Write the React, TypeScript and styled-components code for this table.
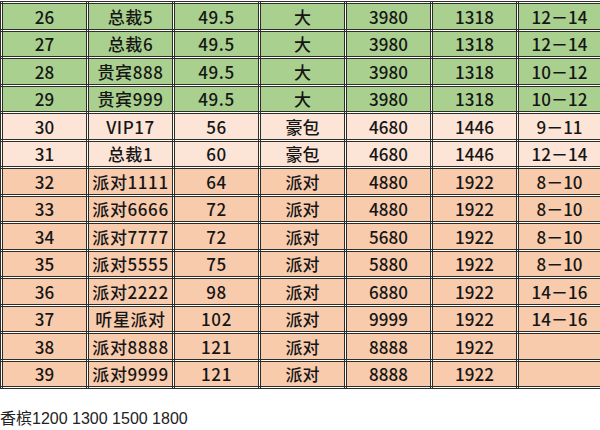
import styled, { createGlobalStyle } from "styled-components";

const GlobalStyle = createGlobalStyle`
  html, body {
    margin: 0;
    padding: 0;
    width: 600px;
    overflow: hidden;
    background: #ffffff;
  }
`;

type Tone = "green" | "light" | "salmon";

const toneColors: Record<Tone, string> = {
  green: "#a9d08e",
  light: "#fce4d6",
  salmon: "#f8cbad",
};

const Page = styled.div`
  padding: 1px 0 0 0;
  width: 600px;
  overflow: hidden;
`;

const Table = styled.table`
  border-collapse: collapse;
  table-layout: fixed;
  width: 600px;
`;

const Row = styled.tr<{ $tone: Tone }>`
  height: 27.5px;
  background: ${(p) => toneColors[p.$tone]};
`;

const Cell = styled.td<{ $last?: boolean }>`
  border: 3px double #2e2e28;
  border-right: ${(p) => (p.$last ? "none" : "3px double #2e2e28")};
  padding: 0;
  width: ${(p) => (p.$last ? 81 : 83)}px;
  text-align: center;
  vertical-align: middle;
  font-family: "Noto Sans CJK SC", sans-serif;
  font-size: 17px;
  font-weight: 500;
  line-height: 1;
  color: #161616;
  white-space: nowrap;
  overflow: hidden;
`;

const WideCell = styled(Cell)`
  letter-spacing: 0.6px;
`;

const Caption = styled.p`
  margin: 16px 0 0 0;
  font-family: "Liberation Sans", "Noto Sans CJK SC", sans-serif;
  font-size: 16px;
  color: #222222;
`;

interface RoomRow {
  no: number;
  name: string;
  price: string;
  size: string;
  a: string;
  b: string;
  people: string;
  tone: Tone;
}

const rows: RoomRow[] = [
  { no: 26, name: "总裁5", price: "49.5", size: "大", a: "3980", b: "1318", people: "12－14", tone: "green" },
  { no: 27, name: "总裁6", price: "49.5", size: "大", a: "3980", b: "1318", people: "12－14", tone: "green" },
  { no: 28, name: "贵宾888", price: "49.5", size: "大", a: "3980", b: "1318", people: "10－12", tone: "green" },
  { no: 29, name: "贵宾999", price: "49.5", size: "大", a: "3980", b: "1318", people: "10－12", tone: "green" },
  { no: 30, name: "VIP17", price: "56", size: "豪包", a: "4680", b: "1446", people: "9－11", tone: "light" },
  { no: 31, name: "总裁1", price: "60", size: "豪包", a: "4680", b: "1446", people: "12－14", tone: "light" },
  { no: 32, name: "派对1111", price: "64", size: "派对", a: "4880", b: "1922", people: "8－10", tone: "salmon" },
  { no: 33, name: "派对6666", price: "72", size: "派对", a: "4880", b: "1922", people: "8－10", tone: "salmon" },
  { no: 34, name: "派对7777", price: "72", size: "派对", a: "5680", b: "1922", people: "8－10", tone: "salmon" },
  { no: 35, name: "派对5555", price: "75", size: "派对", a: "5880", b: "1922", people: "8－10", tone: "salmon" },
  { no: 36, name: "派对2222", price: "98", size: "派对", a: "6880", b: "1922", people: "14－16", tone: "salmon" },
  { no: 37, name: "听星派对", price: "102", size: "派对", a: "9999", b: "1922", people: "14－16", tone: "salmon" },
  { no: 38, name: "派对8888", price: "121", size: "派对", a: "8888", b: "1922", people: "", tone: "salmon" },
  { no: 39, name: "派对9999", price: "121", size: "派对", a: "8888", b: "1922", people: "", tone: "salmon" },
];

export default function App() {
  return (
    <Page>
      <GlobalStyle />
      <Table>
        <tbody>
          {rows.map((r) => (
            <Row key={r.no} $tone={r.tone}>
              <Cell>{r.no}</Cell>
              <WideCell>{r.name}</WideCell>
              <WideCell>{r.price}</WideCell>
              <Cell>{r.size}</Cell>
              <Cell>{r.a}</Cell>
              <Cell>{r.b}</Cell>
              <Cell $last>{r.people}</Cell>
            </Row>
          ))}
        </tbody>
      </Table>
      <Caption>香槟1200 1300 1500 1800</Caption>
    </Page>
  );
}
